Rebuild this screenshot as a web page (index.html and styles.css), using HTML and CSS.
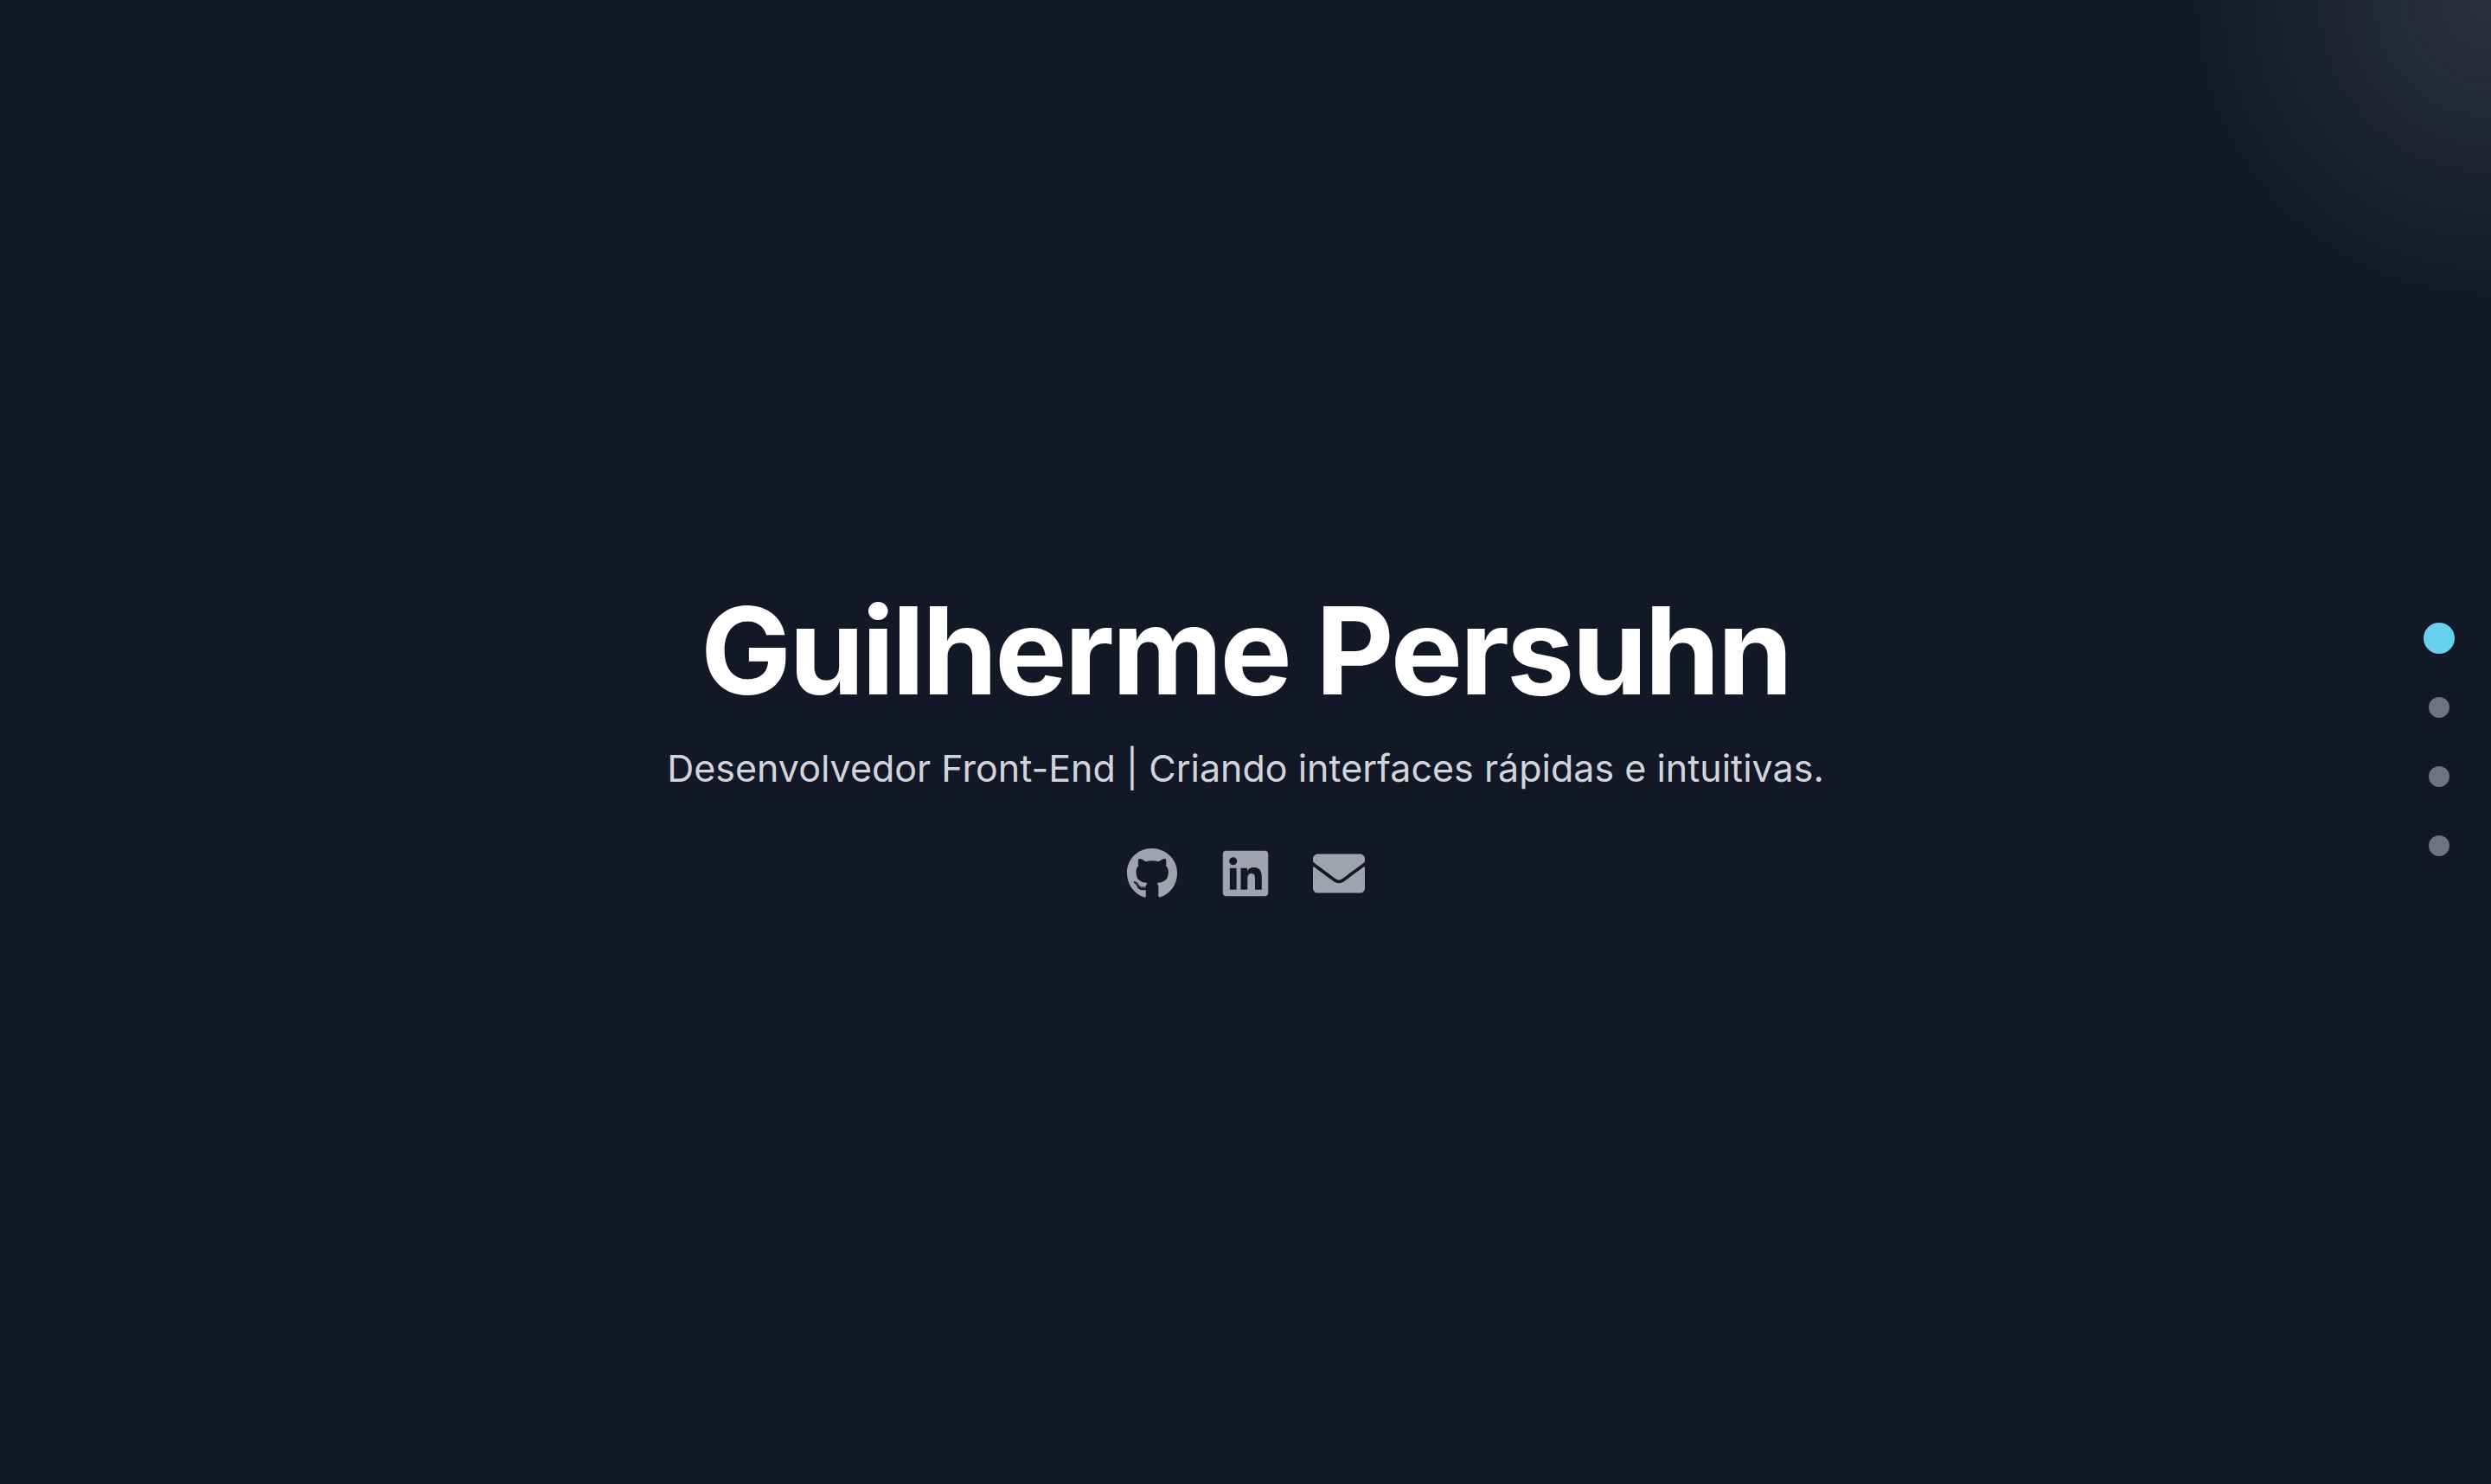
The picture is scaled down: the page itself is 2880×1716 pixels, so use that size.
FILE: index.html
```html
<!DOCTYPE html>
<html lang="pt-BR">
<head>
<meta charset="utf-8">
<title>Guilherme Persuhn</title>
<link rel="stylesheet" href="styles.css">
</head>
<body>
<main class="hero">
  <h1 class="name">Guilherme Persuhn</h1>
  <p class="tagline">Desenvolvedor Front-End | Criando interfaces rápidas e intuitivas.</p>
  <div class="social">
    <a href="#github" aria-label="GitHub"><svg class="icon" viewBox="0 0 496 512"><path d="M165.9 397.4c0 2-2.3 3.6-5.2 3.6-3.3.3-5.6-1.3-5.6-3.6 0-2 2.3-3.6 5.2-3.6 3-.3 5.6 1.3 5.6 3.6zm-31.1-4.5c-.7 2 1.3 4.3 4.3 4.9 2.6 1 5.6 0 6.2-2s-1.3-4.3-4.3-5.2c-2.6-.7-5.5.3-6.2 2.3zm44.2-1.7c-2.9.7-4.9 2.6-4.6 4.9.3 2 2.9 3.3 5.9 2.6 2.9-.7 4.9-2.6 4.6-4.6-.3-1.9-3-3.2-5.9-2.9zM244.8 8C106.1 8 0 113.3 0 252c0 110.9 69.8 205.8 169.5 239.2 12.8 2.3 17.3-5.6 17.3-12.1 0-6.2-.3-40.4-.3-61.4 0 0-70 15-84.7-29.8 0 0-11.4-29.1-27.8-36.6 0 0-22.9-15.7 1.6-15.4 0 0 24.9 2 38.6 25.8 21.9 38.6 58.6 27.5 72.9 20.9 2.3-16 8.8-27.1 16-33.7-55.9-6.2-112.3-14.3-112.3-110.5 0-27.5 7.6-41.3 23.6-58.9-2.6-6.5-11.1-33.3 2.6-67.9 20.9-6.5 69 27 69 27 20-5.6 41.5-8.5 62.8-8.5s42.8 2.9 62.8 8.5c0 0 48.1-33.6 69-27 13.7 34.7 5.2 61.4 2.6 67.9 16 17.7 25.8 31.5 25.8 58.9 0 96.5-58.9 104.2-114.8 110.5 9.2 7.9 17 22.9 17 46.4 0 33.7-.3 75.4-.3 83.6 0 6.5 4.6 14.4 17.3 12.1C428.2 457.8 496 362.9 496 252 496 113.3 383.5 8 244.8 8zM97.200 352.900c-1.300 1-1 3.300.7 5.200 1.600 1.600 3.900 2.300 5.200 1 1.300-1 1-3.300-.7-5.200-1.600-1.600-3.900-2.300-5.200-1zm-10.800-8.100c-.7 1.300.3 2.900 2.300 3.900 1.600 1 3.600.7 4.300-.7.7-1.300-.3-2.900-2.300-3.900-2-.6-3.600-.3-4.300.7zm32.400 35.600c-1.600 1.300-1 4.300 1.300 6.200 2.300 2.300 5.200 2.600 6.500 1 1.300-1.300.7-4.300-1.300-6.200-2.200-2.300-5.200-2.600-6.500-1zm-11.400-14.700c-1.600 1-1.600 3.600 0 5.900 1.600 2.300 4.300 3.300 5.600 2.300 1.600-1.300 1.600-3.900 0-6.200-1.400-2.300-4-3.300-5.600-2z"/></svg></a>
    <a href="#linkedin" aria-label="LinkedIn"><svg class="icon" viewBox="0 0 448 512"><path d="M416 32H31.9C14.3 32 0 46.5 0 64.3v383.4C0 465.5 14.3 480 31.9 480H416c17.6 0 32-14.5 32-32.3V64.3c0-17.8-14.4-32.3-32-32.3zM135.4 416H69V202.2h66.5V416zm-33.2-243c-21.3 0-38.5-17.3-38.5-38.5S80.9 96 102.2 96c21.2 0 38.5 17.3 38.5 38.5 0 21.3-17.2 38.5-38.5 38.5zm282.1 243h-66.4V312c0-24.8-.5-56.7-34.5-56.7-34.6 0-39.9 27-39.9 54.9V416h-66.4V202.2h63.7v29.2h.9c8.9-16.8 30.6-34.5 62.9-34.5 67.2 0 79.7 44.3 79.7 101.9V416z"/></svg></a>
    <a href="#email" aria-label="E-mail"><svg class="icon" viewBox="0 0 512 512"><path d="M502.3 190.8c3.9-3.1 9.7-.2 9.7 4.7V400c0 26.5-21.5 48-48 48H48c-26.5 0-48-21.5-48-48V195.6c0-5 5.700-7.800 9.700-4.700 22.400 17.400 52.100 39.500 154.100 113.600 21.100 15.400 56.700 47.800 92.200 47.600 35.700.3 72-32.800 92.300-47.600 102-74.100 131.600-96.300 154-113.700zM256 320c23.200.4 56.600-29.200 73.400-41.400 132.700-96.300 142.800-104.700 173.400-128.700 5.800-4.500 9.200-11.500 9.200-18.900v-19c0-26.500-21.500-48-48-48H48c-26.500 0-48 21.500-48 48v19c0 7.400 3.400 14.300 9.200 18.900 30.600 23.900 40.700 32.400 173.400 128.700 16.800 12.200 50.200 41.800 73.400 41.400z"/></svg></a>
  </div>
</main>
<nav class="dots" aria-label="Seções">
  <a class="dot active" href="#inicio" aria-label="Início"></a>
  <a class="dot" href="#sobre" aria-label="Sobre"></a>
  <a class="dot" href="#projetos" aria-label="Projetos"></a>
  <a class="dot" href="#contato" aria-label="Contato"></a>
</nav>
<div class="glow"></div>
</body>
</html>
```
FILE: styles.css
```css
* { box-sizing: border-box; margin: 0; }
body {
  min-height: 100vh;
  background: #121825;
  font-family: Inter, "Liberation Sans", sans-serif;
  overflow: hidden;
}
.hero {
  min-height: 100vh;
  display: flex;
  flex-direction: column;
  align-items: center;
  justify-content: center;
  text-align: center;
}
.name {
  font-size: 140px;
  line-height: 152px;
  font-weight: 700;
  letter-spacing: -3px;
  color: #fff;
}
.tagline {
  margin-top: 24px;
  font-size: 43px;
  line-height: 72px;
  color: #d1d5db;
}
.social { display: flex; gap: 48px; margin-top: 56px; color: #9fa3ae; }
.social a { color: inherit; display: block; }
.icon { display: block; height: 60px; width: 60px; fill: currentColor; }
.dots {
  position: fixed;
  right: 48px;
  top: 50%;
  transform: translateY(-50%);
  display: flex;
  flex-direction: column;
  align-items: center;
  gap: 56px;
}
.dot { width: 24px; height: 24px; border-radius: 50%; background: #6e737f; }
.dot.active { background: #67d1ed; transform: scale(1.5); }
/* Soft light in the top right corner */
.glow {
  position: fixed;
  inset: 0;
  pointer-events: none;
  background: radial-gradient(circle 360px at 100% 0, rgba(255,255,255,.11), transparent);
}
```
